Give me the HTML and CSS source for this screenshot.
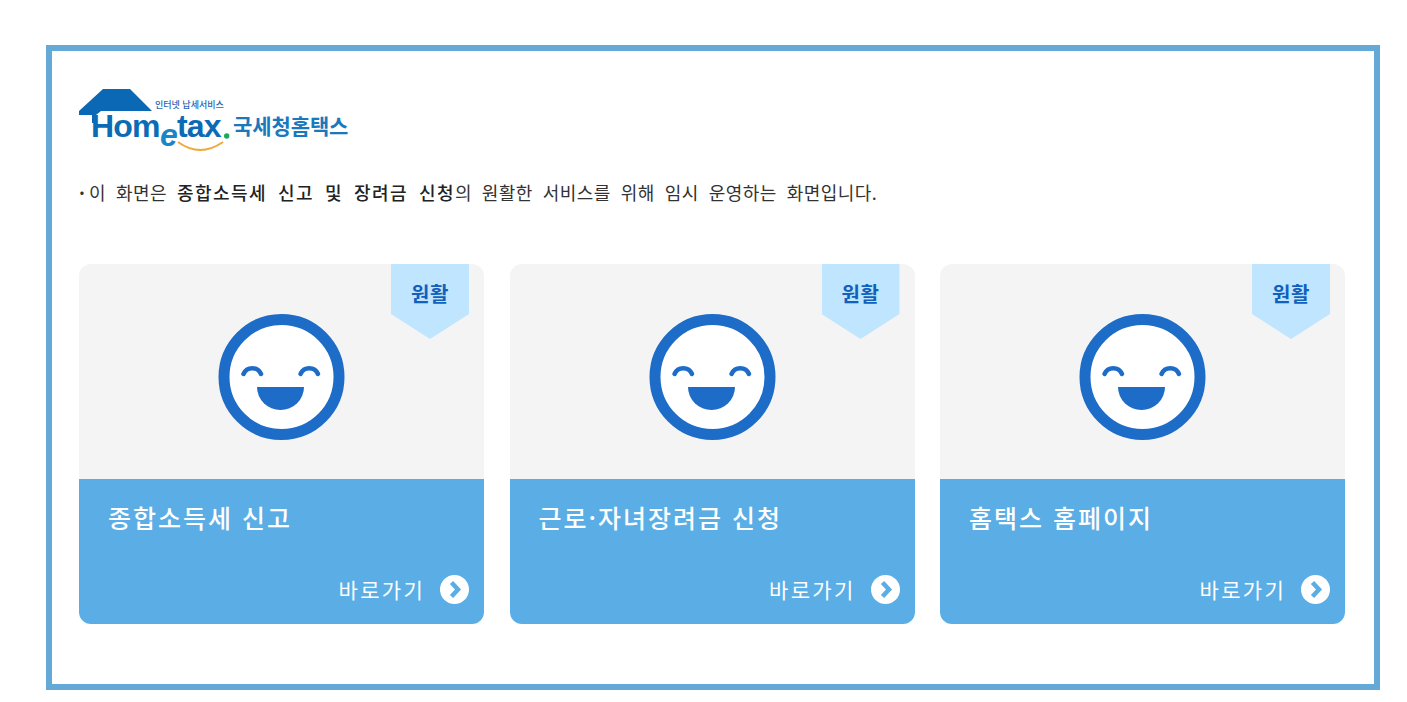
FILE: index.html

```html
<!DOCTYPE html>
<html lang="ko">
<head>
    <meta charset="UTF-8">
    <title>국세청 홈택스</title>
    <link rel="stylesheet" href="styles.css">
</head>
<body>
    <div class="frame">
        <svg class="logo" width="270" height="64" viewBox="0 0 270 64">
            <path class="logo-roof" d="M0 22L24 0H51L73 22H22L17 26V34H13V26H0Z"/>
            <text class="logo-small" x="76" y="19">인터넷 납세서비스</text>
            <text class="logo-home" x="12" y="48">Hom</text>
            <text class="logo-e" x="81" y="57">e</text>
            <text class="logo-home" x="98" y="48">tax</text>
            <circle class="logo-dot" cx="147.700" cy="47" r="2.700"/>
            <path class="logo-arc" d="M99 53Q121 69 144 53"/>
            <text class="logo-name" x="154" y="45">국세청홈택스</text>
        </svg>
        <p class="notice"><span class="bullet">·</span>이 화면은 <b>종합소득세 신고 및 장려금 신청</b>의 원활한 서비스를 위해 임시 운영하는 화면입니다.</p>
        <div class="cards">
            <div class="card">
                <div class="card-top">
                    <div class="badge">원활</div>
                    <svg class="smile" width="127" height="126" viewBox="0 0 127 126">
                        <circle class="smile-face" cx="63.500" cy="63" r="57.500"/>
                        <path class="smile-eye" d="M25.500 60A9.500 9.500 0 0 1 43 60"/>
                        <path class="smile-eye" d="M82.500 60A9.500 9.500 0 0 1 100 60"/>
                        <path class="smile-mouth" d="M39 73H86A23.500 23 0 0 1 39 73Z"/>
                    </svg>
                </div>
                <div class="card-bottom">
                    <div class="card-title">종합소득세 신고</div>
                    <div class="card-link">바로가기
                        <svg class="go" width="29" height="29" viewBox="0 0 29 29">
                            <circle class="go-bg" cx="14.500" cy="14.500" r="14.500"/>
                            <path class="go-arrow" d="M11.500 7.500L18 14.500L11.500 21.500"/>
                        </svg>
                    </div>
                </div>
            </div>
            <div class="card">
                <div class="card-top">
                    <div class="badge">원활</div>
                    <svg class="smile" width="127" height="126" viewBox="0 0 127 126">
                        <circle class="smile-face" cx="63.500" cy="63" r="57.500"/>
                        <path class="smile-eye" d="M25.500 60A9.500 9.500 0 0 1 43 60"/>
                        <path class="smile-eye" d="M82.500 60A9.500 9.500 0 0 1 100 60"/>
                        <path class="smile-mouth" d="M39 73H86A23.500 23 0 0 1 39 73Z"/>
                    </svg>
                </div>
                <div class="card-bottom">
                    <div class="card-title">근로·자녀장려금 신청</div>
                    <div class="card-link">바로가기
                        <svg class="go" width="29" height="29" viewBox="0 0 29 29">
                            <circle class="go-bg" cx="14.500" cy="14.500" r="14.500"/>
                            <path class="go-arrow" d="M11.500 7.500L18 14.500L11.500 21.500"/>
                        </svg>
                    </div>
                </div>
            </div>
            <div class="card">
                <div class="card-top">
                    <div class="badge">원활</div>
                    <svg class="smile" width="127" height="126" viewBox="0 0 127 126">
                        <circle class="smile-face" cx="63.500" cy="63" r="57.500"/>
                        <path class="smile-eye" d="M25.500 60A9.500 9.500 0 0 1 43 60"/>
                        <path class="smile-eye" d="M82.500 60A9.500 9.500 0 0 1 100 60"/>
                        <path class="smile-mouth" d="M39 73H86A23.500 23 0 0 1 39 73Z"/>
                    </svg>
                </div>
                <div class="card-bottom">
                    <div class="card-title">홈택스 홈페이지</div>
                    <div class="card-link">바로가기
                        <svg class="go" width="29" height="29" viewBox="0 0 29 29">
                            <circle class="go-bg" cx="14.500" cy="14.500" r="14.500"/>
                            <path class="go-arrow" d="M11.500 7.500L18 14.500L11.500 21.500"/>
                        </svg>
                    </div>
                </div>
            </div>
        </div>
    </div>
</body>
</html>
```

FILE: styles.css

```css
body {
    margin: 0;
    background: #fff;
    font-family: "Noto Sans CJK KR", "Noto Sans", sans-serif;
}
.frame {
    box-sizing: border-box;
    width: 1334px;
    height: 645px;
    margin: 45px 0 0 46px;
    padding: 38px 29px 0 27px;
    border: 6px solid #65a9d7;
}
.logo {
    display: block;
}
.logo-roof {
    fill: #0b68b4;
}
.logo-small {
    font-size: 9px;
    font-weight: 500;
    fill: #2b62b5;
}
.logo-home {
    font-family: "Liberation Sans", sans-serif;
    font-size: 32px;
    font-weight: bold;
    letter-spacing: -0.8px;
    fill: #0b6cb5;
}
.logo-e {
    font-family: "Liberation Sans", sans-serif;
    font-size: 32px;
    font-weight: bold;
    font-style: italic;
    fill: #1b86c6;
}
.logo-dot {
    fill: #1eaa5a;
}
.logo-arc {
    fill: none;
    stroke: #f0a83c;
    stroke-width: 2;
}
.logo-name {
    font-size: 21px;
    font-weight: 700;
    letter-spacing: -0.1px;
    fill: #1a78bd;
}
.notice {
    margin: 27px 0 0 0;
    height: 42px;
    font-size: 18px;
    line-height: 24px;
    letter-spacing: 0.44px;
    word-spacing: 4.500px;
    color: #333;
}
.notice b {
    font-weight: 500;
    letter-spacing: 1.44px;
    color: #222;
}
.bullet {
    display: inline-block;
    width: 10px;
    font-weight: bold;
}
.cards {
    display: flex;
    justify-content: space-between;
    margin-top: 42px;
}
.card {
    width: 405px;
    height: 360px;
    border-radius: 12px;
    overflow: hidden;
}
.card-top {
    position: relative;
    display: flex;
    align-items: center;
    justify-content: center;
    height: 215px;
    padding-top: 10px;
    box-sizing: border-box;
    background: #f4f4f4;
}
.badge {
    position: absolute;
    top: 0;
    right: 15px;
    width: 78px;
    height: 75px;
    padding-top: 17px;
    box-sizing: border-box;
    text-align: center;
    font-size: 20px;
    line-height: 26px;
    font-weight: bold;
    letter-spacing: 0.5px;
    color: #1160bb;
    background: #c0e5ff;
    clip-path: polygon(0 0, 100% 0, 100% 50px, 50% 100%, 0 50px);
}
.smile-face {
    fill: #fff;
    stroke: #1c6cc8;
    stroke-width: 11;
}
.smile-eye {
    fill: none;
    stroke: #1c6cc8;
    stroke-width: 4.500;
    stroke-linecap: round;
}
.smile-mouth {
    fill: #1c6cc8;
}
.card-bottom {
    display: flex;
    flex-direction: column;
    justify-content: space-between;
    height: 145px;
    padding: 19px 15px 20px 29px;
    box-sizing: border-box;
    background: #5aaee5;
    color: #fff;
}
.card-title {
    font-size: 25px;
    line-height: 38px;
    font-weight: 500;
    letter-spacing: 2px;
}
.card-link {
    display: flex;
    align-items: center;
    justify-content: flex-end;
    gap: 15px;
    font-size: 21px;
    line-height: 29px;
    letter-spacing: 2.300px;
}
.go-bg {
    fill: #fff;
}
.go-arrow {
    fill: none;
    stroke: #5aaee5;
    stroke-width: 4.500;
}
```
